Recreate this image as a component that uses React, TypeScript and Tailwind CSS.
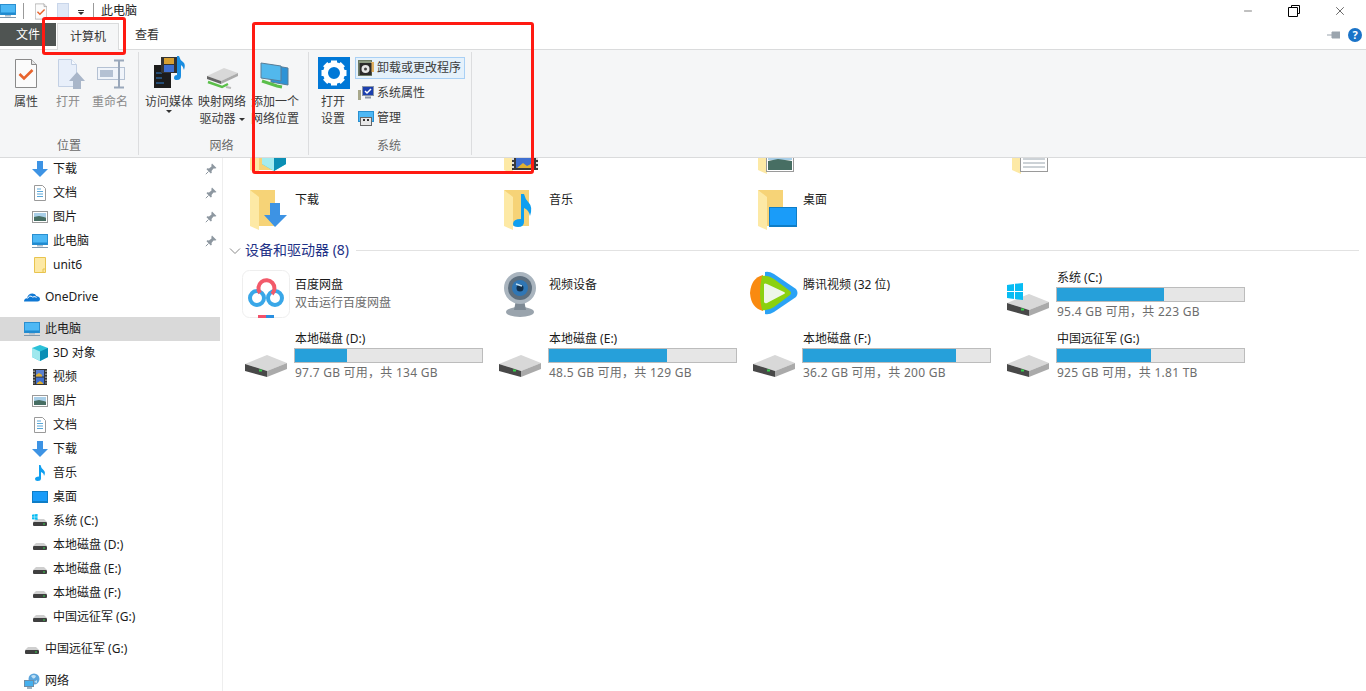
import { Minus, X } from 'lucide-react'
import type { ReactNode } from 'react'

function Monitor({ size = 16 }: { size?: number }) {
  return (
    <svg width={size} height={size} viewBox="0 0 16 16">
      <rect x="0.5" y="1.5" width="15" height="10" fill="#4db8f5" stroke="#2a8fd0" />
      <rect x="1" y="9.5" width="14" height="2" fill="#1f8ad0" />
      <rect x="5" y="12" width="6" height="1.5" fill="#a9bccb" />
      <rect x="0" y="14" width="16" height="1" fill="#7f98ad" />
    </svg>
  )
}

function CheckDoc({ w = 12, h = 17 }: { w?: number; h?: number }) {
  return (
    <svg width={w} height={h} viewBox="0 0 22 29">
      <path d="M.5.5h16l5 5v23H.5z" fill="#fbfbfb" stroke="#8a8a8a" />
      <path d="M16.5.5v5h5" fill="#e6e6e6" stroke="#8a8a8a" />
      <path d="M4.5 15l4.5 4.5 8.5-8.5" fill="none" stroke="#e8632c" strokeWidth="2.6" />
    </svg>
  )
}

function ArrowDown() {
  return (
    <svg width="16" height="16" viewBox="0 0 16 16">
      <path d="M5 0h6v8h5l-8 8-8-8h5z" fill="#3d93e4" />
    </svg>
  )
}

function DocIcon() {
  return (
    <svg width="16" height="16" viewBox="0 0 16 16">
      <path d="M2.5.5h8l3 3v12h-11z" fill="#fff" stroke="#9a9a9a" />
      <path d="M5 4h4M5 6.5h6M5 9h6M5 11.5h6" stroke="#5aa7d8" />
    </svg>
  )
}

function PicIcon() {
  return (
    <svg width="16" height="16" viewBox="0 0 16 16">
      <rect x="0.5" y="2.5" width="15" height="11" fill="#fff" stroke="#9a9a9a" />
      <rect x="2" y="4" width="12" height="4" fill="#a9cfe8" />
      <path d="M2 8l5-1 7 1.5V12H2z" fill="#476e63" />
    </svg>
  )
}

function YellowFile() {
  return (
    <svg width="16" height="16" viewBox="0 0 16 16">
      <path d="M2.5.5h11v15h-11z" fill="#fde9a5" stroke="#e8c44f" />
      <path d="M11 15.5V12h2.5" fill="none" stroke="#e8c44f" />
    </svg>
  )
}

function Cloud() {
  return (
    <svg width="16" height="16" viewBox="0 0 16 16">
      <path d="M0 12.5q0-3 3-3.3Q4 4.500 8.500 4.500q3 0 4 2.700 3.500.3 3.500 3 0 2.300-2.500 2.300H1.500z" fill="#0f78d4" />
      <path d="M3.500 9.500q2-4 5-1.500 3-1 4 .5" fill="none" stroke="#fff" />
    </svg>
  )
}

function Cube() {
  return (
    <svg width="16" height="16" viewBox="0 0 16 16">
      <path d="M8 0l8 3v9l-8 4-8-4V3z" fill="#2cc1d8" />
      <path d="M0 3l8 3.500V16l-8-4z" fill="#9ee8ee" />
      <path d="M16 3L8 6.500V16l8-4z" fill="#0b8fb5" />
    </svg>
  )
}

function Film() {
  return (
    <svg width="16" height="16" viewBox="0 0 16 16">
      <rect x="1" y="0" width="14" height="16" fill="#333" />
      <rect x="4" y="1" width="8" height="6.500" fill="#5a7fd0" />
      <rect x="4" y="8.500" width="8" height="6.500" fill="#3f6fd0" />
      <path d="M4 6l3-2 3 2v1.500H4zM5 14l3-2 3 2v1H5z" fill="#e0b030" />
      <path d="M2 1.500v13M14 1.500v13" stroke="#eee" strokeDasharray="1.500 1.500" />
    </svg>
  )
}

function Note() {
  return (
    <svg width="16" height="16" viewBox="0 0 16 16">
      <path d="M7 0h1.500q.5 3 3 5t.5 6q0-3-3-4v6.500Q9 16 5.500 16 3 16 3 14q0-2.500 4-2.500z" fill="#0f9ff0" />
    </svg>
  )
}

function DesktopIcon() {
  return (
    <svg width="16" height="16" viewBox="0 0 16 16">
      <rect x="0.5" y="2.500" width="15" height="11" fill="#1a9cf9" stroke="#0f7dc6" />
      <rect x="1" y="12" width="14" height="1.500" fill="#0f7dc6" />
    </svg>
  )
}

function WinFlag({ x, y, s }: { x: number; y: number; s: number }) {
  return (
    <g transform={`translate(${x} ${y}) scale(${s})`} fill="#08bcf3">
      <path d="M0 2l7-1v7H0zM8 .8L16 0v8H8zM0 9h7v7l-7-1zM8 9h8v8l-8-1z" />
    </g>
  )
}

function Drive({ flag = false }: { flag?: boolean }) {
  return (
    <svg width="48" height="48" viewBox="0 0 48 48" className="shrink-0">
      <path d="M3 23l22-9 20 8-20 8z" fill="#d8d8d8" />
      <path d="M3 23l22 7v6L3 30z" fill="#484848" />
      <path d="M25 30l20-8v6l-20 8z" fill="#aaa" />
      <rect x="17" y="28.500" width="3" height="2" fill="#35d04a" />
      {flag && <WinFlag x={3} y={3} s={1} />}
    </svg>
  )
}

function SmallDrive({ flag = false }: { flag?: boolean }) {
  return (
    <svg width="16" height="16" viewBox="0 0 16 16" className="shrink-0">
      <path d="M1 9l3-3h8l3 3z" fill="#cfcfcf" />
      <rect x="1" y="9" width="14" height="4" rx="1" fill="#3f3f3f" />
      <rect x="11" y="10.500" width="2" height="1" fill="#35d04a" />
      {flag && <WinFlag x={0} y={1} s={0.35} />}
    </svg>
  )
}

function GlobeIcon() {
  return (
    <svg width="16" height="16" viewBox="0 0 16 16">
      <circle cx="10" cy="6" r="5.500" fill="#5ba5dc" />
      <path d="M7 3q3-2 5 0-1 3-3 2.500zM10 9l3-2v3z" fill="#bfe0f5" />
      <rect x="0.500" y="7.500" width="9" height="6" fill="#45b0ee" stroke="#6d8ea8" />
      <path d="M3 15h5" stroke="#7f98ad" strokeWidth="1.500" />
    </svg>
  )
}

function Pin() {
  return (
    <svg width="12" height="12" viewBox="0 0 12 12">
      <path d="M7 .5l4.500 4.500-1.200.6L8.500 5.500 6.500 8 6.800 9.800 5.800 10.500 1.500 6.200l.7-1 1.800.3L6.500 3.500 6.400 1.700z" fill="#8d97a0" />
      <path d="M3.500 8.500L.8 11.200" stroke="#8d97a0" />
    </svg>
  )
}

function Folder({ children }: { children?: ReactNode }) {
  return (
    <svg width="48" height="48" viewBox="0 0 48 48" className="shrink-0">
      <path d="M8 4h25v36H17z" fill="#f6d377" />
      <path d="M8 4l9 7v33l-9-4z" fill="#fde9a5" />
      {children}
    </svg>
  )
}

function FolderCube() {
  return (
    <Folder>
      <path d="M32 10l12 6v18l-12 7-12-7V16z" fill="#2cc1d8" />
      <path d="M20 16l12 6v19l-12-7z" fill="#a4ecef" />
      <path d="M44 16l-12 6v19l12-7z" fill="#0b8fb5" />
    </Folder>
  )
}

function FolderFilm() {
  return (
    <Folder>
      <rect x="16" y="18" width="26" height="22" fill="#3a3a3a" />
      <path d="M17 20v18M41 20v18" stroke="#ddd" strokeWidth="2" strokeDasharray="2 2" />
      <rect x="20" y="20" width="18" height="18" fill="#3f6fd0" />
      <path d="M21 38l6-5 4 3 6-3v5z" fill="#e0b030" />
    </Folder>
  )
}

function FolderPic() {
  return (
    <Folder>
      <rect x="16.500" y="20.500" width="27" height="21" fill="#fff" stroke="#9a9a9a" />
      <rect x="18" y="22" width="24" height="8" fill="#a9cfe8" />
      <path d="M18 31l10-2 14 2v9H18z" fill="#476e63" />
    </Folder>
  )
}

function FolderDoc() {
  return (
    <Folder>
      <rect x="16.500" y="20.500" width="27" height="21" fill="#fff" stroke="#9a9a9a" />
      <path d="M19 25h14M19 29h22M19 33h22M19 37h22" stroke="#9aa5ae" />
      <rect x="33" y="23" width="8" height="5" fill="#476e63" />
    </Folder>
  )
}

function FolderDown() {
  return (
    <Folder>
      <path d="M28 17h10v12h7L33 41 22 29h6z" fill="#3d93e4" />
    </Folder>
  )
}

function FolderMusic() {
  return (
    <Folder>
      <path d="M25 8h3q1 5 5 9t1 13q-1-6-6-8v14q0 5-6 5-5 0-5-3 0-5 8-5z" fill="#0f9ff0" />
    </Folder>
  )
}

function FolderDesktop() {
  return (
    <Folder>
      <rect x="19.500" y="21.500" width="27" height="19" fill="#1a9cf9" stroke="#0f7dc6" />
      <rect x="20" y="39" width="26" height="2" fill="#0f7dc6" />
    </Folder>
  )
}

function BaiduLogo() {
  return (
    <svg width="48" height="48" viewBox="0 0 48 48" className="shrink-0">
      <rect x="0.500" y="0.500" width="47" height="47" rx="7" fill="#fff" stroke="#eeeeee" />
      <circle cx="15" cy="28" r="7" fill="none" stroke="#39a7e8" strokeWidth="4" />
      <circle cx="33" cy="28" r="7" fill="none" stroke="#39a7e8" strokeWidth="4" />
      <path d="M18 23a8 8 0 1 1 12 1" fill="none" stroke="#f25a6a" strokeWidth="4" />
      <rect x="16" y="45" width="8" height="3" fill="#f2516a" />
      <rect x="24" y="45" width="8" height="3" fill="#2a8fe0" />
    </svg>
  )
}

function Webcam() {
  return (
    <svg width="48" height="48" viewBox="0 0 48 48" className="shrink-0">
      <ellipse cx="24" cy="42" rx="14" ry="5" fill="#9aa4ad" />
      <path d="M20 30h8l2 10H18z" fill="#7d8994" />
      <circle cx="24" cy="18" r="16" fill="#a9b4be" />
      <circle cx="24" cy="18" r="12" fill="#5d6e7d" />
      <circle cx="24" cy="18" r="8" fill="#2f76b5" />
      <circle cx="24" cy="18" r="3.500" fill="#12304d" />
      <path d="M20 14l6 2" stroke="#bfe0f5" strokeWidth="1.500" />
    </svg>
  )
}

function TencentLogo() {
  return (
    <svg width="48" height="48" viewBox="0 0 48 48" className="shrink-0">
      <path d="M15 2q4-1 9 2l22 15q3 4 0 8L24 42q-5 3-9 2z" fill="#2aa2f5" />
      <path d="M13 5Q1 8 0 23q1 15 13 18 2-18 0-36z" fill="#f98a10" />
      <path d="M12 6q6-1 12 3l16 12q2 2 0 4L24 37q-6 4-12 3-4-17 0-34z" fill="#8bd10f" />
      <path d="M14 14q1-1 3 0l17 8q2 1 0 2l-17 9q-2 1-3-1z" fill="#eef6e8" />
    </svg>
  )
}

function OpenFile() {
  return (
    <svg width="40" height="38" viewBox="0 0 40 38">
      <path d="M10.500 5.500h13l5 5v22h-18z" fill="#e8effa" stroke="#c3d0e4" />
      <path d="M23.500 5.500v5h5" fill="#f6f9fd" stroke="#c3d0e4" />
      <path d="M29 18l8 9h-4v8h-8v-8h-4z" fill="#a9b6c9" />
    </svg>
  )
}

function Rename() {
  return (
    <svg width="40" height="38" viewBox="0 0 40 38">
      <rect x="7.500" y="13.500" width="27" height="12" fill="#f0f4fa" stroke="#b4c1d3" />
      <rect x="10" y="16" width="13" height="7" fill="#b4c1d3" />
      <path d="M24 6.500h10M24 33.500h10M29 7v26" stroke="#9aa8bb" strokeWidth="2" fill="none" />
    </svg>
  )
}

function MediaServer() {
  return (
    <svg width="48" height="38" viewBox="0 0 48 38">
      <rect x="9" y="11" width="17" height="23" fill="#1c1c1c" />
      <path d="M11 19h6M11 24h6M11 29h8" stroke="#2f7fd0" />
      <rect x="16" y="3" width="16" height="16" fill="#333" />
      <rect x="19" y="4" width="10" height="6" fill="#d8a030" />
      <rect x="19" y="11" width="10" height="7" fill="#3f6fd0" />
      <path d="M32 2h2q1 4 4 6t1 8q-1-4-3-5v11q0 4-4 4-3 0-3-2 0-3 3-3z" fill="#1a8de0" />
    </svg>
  )
}

function NetDrive() {
  return (
    <svg width="48" height="38" viewBox="0 0 48 38">
      <path d="M9 22l17-8 14 5-17 8z" fill="#d8d8d8" />
      <path d="M9 22l14 5v3L9 25z" fill="#666" />
      <path d="M23 27l17-8v3l-17 8z" fill="#aaa" />
      <path d="M10 28l14 5 6-3" fill="none" stroke="#5bbf4a" strokeWidth="2.500" />
      <path d="M28 33l5 1" stroke="#bbb" strokeWidth="2" />
    </svg>
  )
}

function NetPlace() {
  return (
    <svg width="48" height="38" viewBox="0 0 48 38">
      <path d="M20 11l17 3v17l-17-3z" fill="#2e93d6" stroke="#5a7d96" />
      <path d="M10 9l20 3v15l-20-3z" fill="#52b8ec" stroke="#5a7d96" />
      <path d="M11 27l15 5 5 1" fill="none" stroke="#5bbf4a" strokeWidth="3" />
    </svg>
  )
}

function GearTile() {
  return (
    <svg width="32" height="32" viewBox="0 0 32 32" className="shrink-0">
      <rect width="32" height="32" fill="#0078d7" />
      {[0, 45, 90, 135, 180, 225, 270, 315].map(a => (
        <rect key={a} x="13" y="3.500" width="6" height="6" fill="#fff" transform={`rotate(${a} 16 16)`} />
      ))}
      <circle cx="16" cy="16" r="8.500" fill="none" stroke="#fff" strokeWidth="5" />
    </svg>
  )
}

function UninstallIcon() {
  return (
    <svg width="16" height="16" viewBox="0 0 16 16">
      <rect x="0.500" y="0.500" width="13" height="15" fill="#8c9a82" stroke="#6c7a64" />
      <rect x="13" y="2" width="3" height="10" fill="#e0b060" />
      <rect x="1.500" y="3" width="12" height="12" fill="#2b2b2b" />
      <circle cx="7.500" cy="9" r="4" fill="#e6e6e6" />
      <circle cx="7.500" cy="9" r="1.500" fill="#444" />
    </svg>
  )
}

function SysPropIcon() {
  return (
    <svg width="16" height="16" viewBox="0 0 16 16">
      <rect x="0" y="5" width="3" height="10" fill="#a8a88c" />
      <rect x="4.500" y="1.500" width="11" height="9" fill="#1c3fae" stroke="#8a95a5" />
      <path d="M7 6l2 2 4-4" fill="none" stroke="#fff" strokeWidth="1.500" />
      <path d="M7 12.500h6" stroke="#8a95a5" strokeWidth="2" />
    </svg>
  )
}

function ManageIcon() {
  return (
    <svg width="16" height="16" viewBox="0 0 16 16">
      <rect x="0.500" y="1.500" width="15" height="10" fill="#4db8f5" stroke="#2a8fd0" />
      <rect x="2.500" y="7.500" width="11" height="8" fill="#e8e8e8" stroke="#666" />
      <rect x="5" y="9" width="2" height="2" fill="#333" />
      <rect x="9" y="9" width="2" height="2" fill="#333" />
    </svg>
  )
}

function RibbonButton(props: { icon: ReactNode; lines: ReactNode[]; width: string; muted?: boolean }) {
  const { icon, lines, width, muted } = props
  return (
    <div className={`flex flex-col items-center ${width} ${muted ? 'text-[#8a8a8a]' : 'text-[#3c3c3c]'}`}>
      <div className="flex h-[41px] items-start justify-center pt-[2px]">{icon}</div>
      {lines.map((line, i) => (
        <div key={i} className="whitespace-nowrap text-center leading-[17px]">
          {line}
        </div>
      ))}
    </div>
  )
}

function RibbonGroup(props: { label: string; width: string; labelClass?: string; children: ReactNode }) {
  const { label, width, labelClass, children } = props
  return (
    <div className={`flex h-[103px] shrink-0 flex-col border-r border-[#dcdddf] ${width}`}>
      <div className="flex h-[83px]">{children}</div>
      <div className={`mt-[2px] text-center leading-[17px] text-[#6a6a6a] ${labelClass ?? ''}`}>{label}</div>
    </div>
  )
}

function Caret() {
  return <span className="inline-block h-0 w-0 border-x-[3px] border-t-[3px] border-x-transparent border-t-[#333] align-middle" />
}

function Ribbon() {
  return (
    <div className="flex h-[109px] border-y border-[#dadbdc] bg-[#f5f6f7] pt-[2px]">
      <RibbonGroup label="位置" width="w-[139px]">
        <div className="flex gap-[2px] pl-[6px]">
          <RibbonButton width="w-10" lines={['属性']} icon={<div className="ml-[-1px] mt-[5px]"><CheckDoc w={22} h={29} /></div>} />
          <RibbonButton width="w-10" muted lines={['打开']} icon={<OpenFile />} />
          <RibbonButton width="w-10" muted lines={['重命名']} icon={<Rename />} />
        </div>
      </RibbonGroup>
      <RibbonGroup label="网络" width="w-[170px]" labelClass="pr-[4px]">
        <div className="flex gap-[5px] pl-[6px]">
          <RibbonButton width="w-12" lines={['访问媒体', <div key="c" className="-mt-[8px]"><Caret /></div>]} icon={<MediaServer />} />
          <RibbonButton width="w-12" lines={['映射网络', <span key="d">驱动器 <Caret /></span>]} icon={<NetDrive />} />
          <RibbonButton width="w-12" lines={['添加一个', '网络位置']} icon={<NetPlace />} />
        </div>
      </RibbonGroup>
      <RibbonGroup label="系统" width="w-[163px]" labelClass="pr-[2px]">
        <div className="flex pl-[9px]">
          <div className="flex w-8 flex-col items-center text-[#3c3c3c]">
            <div className="mb-[4px] mt-[5px]"><GearTile /></div>
            <div className="whitespace-nowrap pr-[2px] leading-[17px]">打开</div>
            <div className="whitespace-nowrap pr-[2px] leading-[17px]">设置</div>
          </div>
          <div className="ml-[5px] mt-[5px] flex w-[110px] flex-col gap-[3px] text-[#3c3c3c]">
            <div className="flex h-[22px] items-center gap-[3px] border border-[#a9d0f5] bg-[#e5f1fb] pl-[2px]">
              <UninstallIcon />
              <span className="whitespace-nowrap">卸载或更改程序</span>
            </div>
            <div className="flex h-[22px] items-center gap-[3px] pl-[3px]">
              <SysPropIcon />
              <span>系统属性</span>
            </div>
            <div className="flex h-[22px] items-center gap-[3px] pl-[3px]">
              <ManageIcon />
              <span>管理</span>
            </div>
          </div>
        </div>
      </RibbonGroup>
    </div>
  )
}

function TitleBar() {
  return (
    <div className="flex h-[23px] items-center text-[#222]">
      <Monitor />
      <div className="ml-[7px] h-4 w-px bg-[#9a9a9a]" />
      <div className="ml-[11px]"><CheckDoc /></div>
      <div className="ml-[10px] h-[17px] w-3 border border-[#c9d6ea] bg-[#dfe8f6]" />
      <div className="ml-[9px] mt-[3px] flex flex-col items-center gap-px">
        <div className="h-px w-[6px] bg-[#333]" />
        <Caret />
      </div>
      <div className="ml-[9px] h-4 w-px bg-[#9a9a9a]" />
      <span className="ml-[7px]">此电脑</span>
      <div className="ml-auto flex items-center">
        <Minus size={12} strokeWidth={1} className="mr-[34px] text-black" />
        <svg width="12" height="12" viewBox="0 0 12 12" className="mr-[33px]">
          <path d="M3.500 2.500V.5h8v8h-2M.5 2.500h9v9h-9z" fill="none" stroke="#000" />
        </svg>
        <X size={14} strokeWidth={1} className="mr-[19px] text-black" />
      </div>
    </div>
  )
}

function Tabs() {
  return (
    <div className="flex h-[26px]">
      <div className="flex h-[23px] w-[56px] items-center justify-center bg-[#4f5452] pt-px text-white">文件</div>
      <div className="z-10 ml-px flex h-[27px] w-[62px] items-center justify-center border-x border-t border-[#dadbdc] bg-[#f5f6f7] text-[#333]">
        计算机
      </div>
      <div className="ml-[16px] flex h-[25px] items-center text-[#333]">查看</div>
      <div className="ml-auto flex h-[25px] items-center gap-[8px] pr-[4px]">
        <svg width="13" height="8" viewBox="0 0 13 8">
          <path d="M0 4h5M5 1h8v6H5z" fill="#9ba5ae" stroke="#9ba5ae" />
        </svg>
        <div className="flex size-[14px] items-center justify-center rounded-full bg-[#1a73c8] text-[11px] font-bold text-white">?</div>
      </div>
    </div>
  )
}

type NavItem = { icon: ReactNode; label: string; pin?: boolean; top?: boolean; selected?: boolean; gap?: boolean }

const navItems: NavItem[] = [
  { icon: <ArrowDown />, label: '下载', pin: true },
  { icon: <DocIcon />, label: '文档', pin: true },
  { icon: <PicIcon />, label: '图片', pin: true },
  { icon: <Monitor />, label: '此电脑', pin: true },
  { icon: <YellowFile />, label: 'unit6' },
  { icon: <Cloud />, label: 'OneDrive', top: true, gap: true },
  { icon: <Monitor />, label: '此电脑', top: true, gap: true, selected: true },
  { icon: <Cube />, label: '3D 对象' },
  { icon: <Film />, label: '视频' },
  { icon: <PicIcon />, label: '图片' },
  { icon: <DocIcon />, label: '文档' },
  { icon: <ArrowDown />, label: '下载' },
  { icon: <Note />, label: '音乐' },
  { icon: <DesktopIcon />, label: '桌面' },
  { icon: <SmallDrive flag />, label: '系统 (C:)' },
  { icon: <SmallDrive />, label: '本地磁盘 (D:)' },
  { icon: <SmallDrive />, label: '本地磁盘 (E:)' },
  { icon: <SmallDrive />, label: '本地磁盘 (F:)' },
  { icon: <SmallDrive />, label: '中国远征军 (G:)' },
  { icon: <SmallDrive />, label: '中国远征军 (G:)', top: true, gap: true },
  { icon: <GlobeIcon />, label: '网络', top: true, gap: true },
]

function Sidebar() {
  return (
    <div className="h-full w-[223px] shrink-0 overflow-hidden border-r border-[#eeeeee]">
      <div className="-mt-px w-[220px]">
        {navItems.map((item, i) => (
          <div
            key={i}
            className={`flex h-6 items-center text-[#1a1a1a] ${item.gap ? 'mt-2' : ''} ${item.selected ? 'bg-[#d9d9d9]' : ''} ${item.top ? 'pl-6' : 'pl-8'}`}
          >
            {item.icon}
            <span className="ml-[5px] whitespace-nowrap">{item.label}</span>
            {item.pin && (
              <span className="ml-auto mr-[3px]"><Pin /></span>
            )}
          </div>
        ))}
      </div>
    </div>
  )
}

function FolderCell({ icon, label }: { icon: ReactNode; label?: string }) {
  return (
    <div className="flex w-[254px]">
      {icon}
      {label && <span className="ml-[5px] mt-[5px] leading-[17px] text-[#1a1a1a]">{label}</span>}
    </div>
  )
}

function AppCell(props: { icon: ReactNode; label: string; sub?: string }) {
  const { icon, label, sub } = props
  return (
    <div className="flex w-[254px] pt-px">
      {icon}
      <div className="ml-[5px] mt-[6px] leading-[18px]">
        <div className="text-[#1a1a1a]">{label}</div>
        {sub && <div className="text-[#6d6d6d]">{sub}</div>}
      </div>
    </div>
  )
}

function DriveCell(props: { label: string; used: number; stats: string; flag?: boolean }) {
  const { label, used, stats, flag } = props
  return (
    <div className="flex w-[254px]">
      <div className="mt-[11px]"><Drive flag={flag} /></div>
      <div className="ml-[4px] w-[189px]">
        <div className="pl-px leading-[17px] text-[#1a1a1a]">{label}</div>
        <div className="mt-px h-[15px] border border-[#bcbcbc] bg-[#e6e6e6]">
          <div className="h-full bg-[#26a0da]" style={{ width: `${used}%` }} />
        </div>
        <div className="mt-px whitespace-nowrap pl-px leading-[18px] tracking-[0.25px] text-[#6d6d6d]">{stats}</div>
      </div>
    </div>
  )
}

function Content() {
  return (
    <div className="h-full grow overflow-hidden pl-[19px]">
      <div className="-mt-[28px] flex h-14">
        <FolderCell icon={<FolderCube />} />
        <FolderCell icon={<FolderFilm />} />
        <FolderCell icon={<FolderPic />} />
        <FolderCell icon={<FolderDoc />} />
      </div>
      <div className="flex h-14">
        <FolderCell icon={<FolderDown />} label="下载" />
        <FolderCell icon={<FolderMusic />} label="音乐" />
        <FolderCell icon={<FolderDesktop />} label="桌面" />
      </div>
      <div className="-ml-[13px] flex h-[18px] items-center">
        <svg width="12" height="12" viewBox="0 0 12 12" className="shrink-0">
          <path d="M1 3.500l5 5 5-5" fill="none" stroke="#8a8a8a" />
        </svg>
        <span className="ml-[4px] whitespace-nowrap text-[14px] text-[#1e3287]">设备和驱动器 (8)</span>
        <div className="ml-[7px] mr-[7px] h-px grow bg-[#e2e2e2]" />
      </div>
      <div className="mt-[9px] flex h-[61px]">
        <AppCell icon={<BaiduLogo />} label="百度网盘" sub="双击运行百度网盘" />
        <AppCell icon={<Webcam />} label="视频设备" />
        <AppCell icon={<TencentLogo />} label="腾讯视频 (32 位)" />
        <DriveCell label="系统 (C:)" used={57} stats="95.4 GB 可用，共 223 GB" flag />
      </div>
      <div className="flex h-[61px]">
        <DriveCell label="本地磁盘 (D:)" used={28} stats="97.7 GB 可用，共 134 GB" />
        <DriveCell label="本地磁盘 (E:)" used={63} stats="48.5 GB 可用，共 129 GB" />
        <DriveCell label="本地磁盘 (F:)" used={82} stats="36.2 GB 可用，共 200 GB" />
        <DriveCell label="中国远征军 (G:)" used={50} stats="925 GB 可用，共 1.81 TB" />
      </div>
    </div>
  )
}

export default function App() {
  return (
    <div className="relative flex h-[691px] w-[1366px] flex-col overflow-hidden bg-white font-['Noto_Sans','Noto_Sans_CJK_SC',sans-serif] text-xs">
      <TitleBar />
      <Tabs />
      <Ribbon />
      <div className="flex min-h-0 grow">
        <Sidebar />
        <Content />
      </div>
      {/* red marks drawn over the screenshot */}
      <div className="absolute left-[42px] top-[17px] h-[38px] w-[84px] rounded-[3px] border-[3px] border-[#ff1a12]" />
      <div className="absolute left-[252px] top-[22px] h-[152px] w-[282px] rounded-[3px] border-[3px] border-[#ff1a12]" />
    </div>
  )
}
